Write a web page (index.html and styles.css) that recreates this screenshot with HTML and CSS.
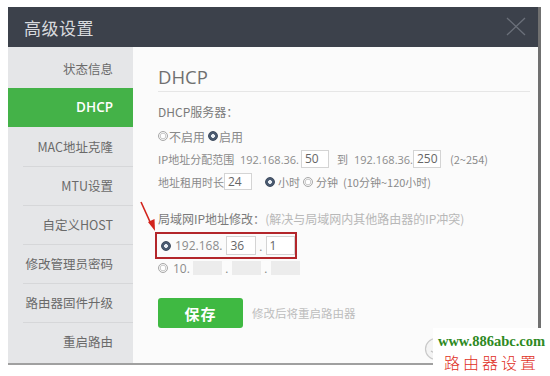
FILE: index.html
```html
<!DOCTYPE html>
<html lang="zh-CN">
<head>
<meta charset="utf-8">
<title>高级设置</title>
<link rel="stylesheet" href="styles.css">
</head>
<body>
<div class="page">
  <div class="dialog">
    <div class="header">
      <span class="title">高级设置</span>
      <svg class="close" width="20" height="19" viewBox="0 0 20 19"><path d="M1 1 L19 18 M19 1 L1 18" stroke="#6b707a" stroke-width="1.3" fill="none"/></svg>
    </div>
    <div class="body">
      <ul class="sidebar">
        <li>状态信息</li>
        <li class="active">DHCP</li>
        <li>MAC地址克隆</li>
        <li>MTU设置</li>
        <li>自定义HOST</li>
        <li>修改管理员密码</li>
        <li>路由器固件升级</li>
        <li>重启路由</li>
      </ul>
      <div class="main">
        <h2 class="heading">DHCP</h2>
        <div class="label">DHCP服务器：</div>
        <div class="row radios">
          <span class="radio"></span><span class="rtext">不启用</span>
          <span class="radio on"></span><span class="rtext">启用</span>
        </div>
        <div class="row small">
          <span class="lbl">IP地址分配范围</span>
          <span class="ip ip1">192.168.36.</span><span class="inp w28">50</span>
          <span class="to">到</span>
          <span class="ip">192.168.36.</span><span class="inp w28">250</span>
          <span class="hint">(2~254)</span>
        </div>
        <div class="row small lease">
          <span class="lbl">地址租用时长</span>
          <span class="inp w28">24</span>
          <span class="radio on r-h"></span><span class="rtext">小时</span>
          <span class="radio r-m"></span><span class="rtext">分钟</span>
          <span class="hint2">(10分钟~120小时)</span>
        </div>
        <div class="label lan">局域网IP地址修改：<span class="note">(解决与局域网内其他路由器的IP冲突)</span></div>
        <div class="redbox">
          <span class="radio on"></span>
          <span class="ip ip3">192.168.</span>
          <span class="inp w30 tall">36</span>
          <span class="dot">.</span>
          <span class="inp w30 tall">1</span>
        </div>
        <div class="row ten">
          <span class="radio"></span>
          <span class="ip ip10">10.</span>
          <span class="inp dis"></span><span class="dot">.</span>
          <span class="inp dis"></span><span class="dot">.</span>
          <span class="inp dis"></span>
        </div>
        <div class="save-row">
          <button class="save">保存</button>
          <span class="savehint">修改后将重启路由器</span>
        </div>
      </div>
    </div>
  </div>
</div>
<svg class="arrow" width="30" height="40" viewBox="0 0 30 40"><path d="M2 2 L12 24" stroke="#d2231c" stroke-width="1.6" fill="none"/><path d="M9 22 L16 31 L15.5 19 Z" fill="#d2231c"/></svg>
<svg class="smile" width="24" height="24" viewBox="0 0 24 24"><circle cx="12" cy="12" r="10.5" fill="#f4f4f4" stroke="#c9c9c9" stroke-width="1.2"/><path d="M7 14 Q12 18 17 14" stroke="#c0c0c0" stroke-width="1.2" fill="none"/></svg>
<div class="watermark">
  <div class="wm-url">www.886abc.com</div>
  <div class="wm-cn">路由器设置</div>
</div>
</body>
</html>
```
FILE: styles.css
```css
html, body {
  margin: 0;
  padding: 0;
  background: #ffffff;
}
body {
  width: 550px;
  height: 376px;
  overflow: hidden;
  position: relative;
  font-family: "Open Sans", "Noto Sans CJK SC", sans-serif;
}
.page {
  padding: 7px 0 0 8px;
}
.dialog {
  width: 530px;
  border-right: 3px solid #707070;
  border-bottom: 2px solid #a0a0a0;
}
.header {
  height: 40px;
  background: #3c414b;
  display: flex;
  align-items: center;
  justify-content: space-between;
  padding: 0 12px 0 16px;
}
.title {
  font-family: "Noto Sans CJK SC", sans-serif;
  font-size: 17px;
  color: #d8dade;
  letter-spacing: 0.5px;
}
.close {
  margin-top: -1px;
}
.body {
  display: flex;
  height: 316px;
}
.sidebar {
  list-style: none;
  margin: 0;
  padding: 2px 0 0;
  width: 125px;
  background: #e5e6e8;
  font-family: "Noto Sans CJK SC", sans-serif;
}
.sidebar li {
  height: 39px;
  line-height: 39px;
  text-align: right;
  padding-right: 20px;
  font-size: 12.5px;
  color: #6a6a6a;
  background: linear-gradient(#d6d7d9, #d6d7d9) 15px 0 / calc(100% - 15px) 1px no-repeat;
}
.sidebar li:first-child {
  background: none;
}
.sidebar li.active {
  background: #44b248;
  color: #ffffff;
  font-family: "Open Sans", sans-serif;
  font-weight: 600;
  font-size: 13.5px;
}
.sidebar li.active + li {
  background: none;
}
.main {
  flex: 1;
  background: #fbfbfb;
  padding: 18px 8px 0 25px;
  color: #8a8a8a;
  font-family: "Noto Sans CJK SC", sans-serif;
}
.heading {
  margin: 0;
  font-family: "Open Sans", sans-serif;
  font-weight: 400;
  font-size: 18.5px;
  line-height: 24px;
  color: #707070;
  padding-bottom: 2px;
  border-bottom: 1px solid #e6e6e6;
}
.label {
  margin-top: 11px;
  font-size: 12px;
  line-height: 18px;
  color: #7a7a7a;
}
.label.lan {
  margin-top: 20px;
}
.note {
  color: #b8b8b8;
}
.row {
  display: flex;
  align-items: center;
  height: 18px;
  margin-top: 6px;
  font-size: 12px;
}
.row.small {
  font-size: 11px;
  margin-top: 5px;
}
.row.lease {
  height: 17px;
}
.radio {
  display: inline-block;
  box-sizing: border-box;
  width: 10px;
  height: 10px;
  border-radius: 50%;
  border: 1px solid #a8a8a8;
  background: radial-gradient(circle, #fff 0 2px, #cfcfcf 2.5px 3px, #f4f4f4 3.5px);
  margin-right: 1px;
  flex: none;
}
.radio.on {
  border-color: #3e4b5e;
  background: radial-gradient(circle, #e8edf3 0 1.6px, #4a5a70 2.2px);
}
.radios .rtext {
  margin-right: 3px;
}
.lbl {
  width: 82px;
}
.ip {
  color: #8c8c8c;
  font-family: "Open Sans", sans-serif;
}
.ip1 {
  margin-right: 2px;
}
.inp {
  display: inline-block;
  box-sizing: border-box;
  height: 18px;
  line-height: 16px;
  border: 1px solid #d4d4d4;
  background: #ffffff;
  font-family: "Open Sans", sans-serif;
  font-size: 12px;
  color: #666;
  padding-left: 3px;
}
.w28 {
  width: 28px;
}
.lease .inp {
  height: 17px;
}
.lease .lbl {
  width: 66px;
}
.to {
  margin: 0 6px 0 8px;
}
.hint {
  margin-left: 9px;
}
.r-h {
  margin-left: 13px;
  margin-right: 3px;
}
.r-m {
  margin-left: 3px;
  margin-right: 3px;
}
.hint2 {
  margin-left: 5px;
}
.redbox {
  margin: 4px 0 0 -3px;
  width: 142px;
  height: 27px;
  box-sizing: border-box;
  border: 2px solid #b3262b;
  display: flex;
  align-items: center;
  padding-left: 4px;
  font-size: 12px;
}
.ip3 {
  margin-left: 3px;
  margin-right: 4px;
}
.inp.w30 {
  width: 30px;
}
.inp.tall {
  height: 19px;
  line-height: 17px;
}
.dot {
  width: 10px;
  text-align: center;
  color: #888;
  font-size: 11px;
}
.row.ten {
  height: 14px;
  margin-top: 2px;
}
.ip10 {
  margin-left: 4px;
  margin-right: 3px;
}
.inp.dis {
  width: 29px;
  height: 14px;
  border: none;
  background: #ececec;
}
.save-row {
  display: flex;
  align-items: center;
  margin-top: 23px;
}
.save {
  width: 85px;
  height: 30px;
  border: none;
  border-radius: 3px;
  background: #3fb942;
  color: #ffffff;
  font-family: "Noto Sans CJK SC", sans-serif;
  font-weight: 700;
  font-size: 15px;
  letter-spacing: 1px;
  padding: 0;
}
.savehint {
  margin-left: 9px;
  font-size: 11.5px;
  color: #bdbdbd;
}
.arrow {
  position: absolute;
  left: 139px;
  top: 200px;
}
.smile {
  position: absolute;
  left: 424px;
  top: 337px;
}
.watermark {
  position: absolute;
  left: 433px;
  top: 328px;
  width: 117px;
  height: 48px;
  background: #ffffff;
  text-align: center;
}
.wm-url {
  font-family: "Liberation Serif", serif;
  font-weight: 700;
  font-size: 14.5px;
  color: #2e8a1f;
  line-height: 18px;
  margin-top: 4px;
}
.wm-cn {
  font-family: "Noto Sans CJK SC", sans-serif;
  font-weight: 300;
  font-size: 16px;
  color: #e0301e;
  letter-spacing: 3px;
  line-height: 22px;
  margin-top: 1px;
}
```
